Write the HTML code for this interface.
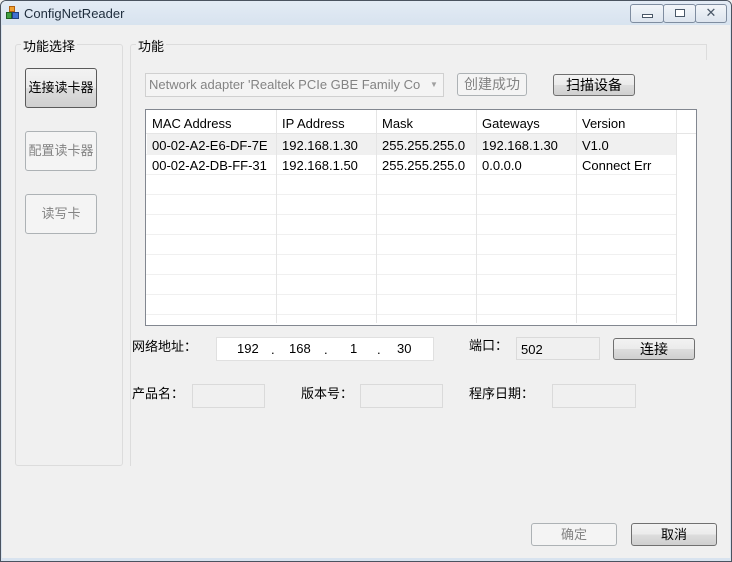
<!DOCTYPE html><html><head><meta charset="utf-8"><style>
*{box-sizing:border-box;margin:0;padding:0}
body{width:732px;height:562px;overflow:hidden;background:#f0f0f0;font-family:"Liberation Sans","Noto Sans CJK SC",sans-serif;font-size:13px;color:#000;position:relative}
.a{position:absolute}
.win{left:0;top:0;width:732px;height:562px;border:1px solid #4a5360;border-radius:6px 6px 0 0;background:#f0f0f0}
.tb{left:1px;top:1px;width:730px;height:24px;background:linear-gradient(#e3ebf5,#d8e3ef);border-radius:5px 5px 0 0}
.frame{left:1px;top:25px;width:730px;height:536px;border:1px solid #d8e3ef;border-top:0;border-bottom:3px solid #d8e3ef}
.cb{height:18px;border:1px solid #7f8da0;border-radius:3px;background:linear-gradient(#f2f5f9,#dde5ee);top:5px}
.gb{border:1px solid #dcdcdc;border-radius:3px}
.btn{border:1px solid #707070;border-radius:3px;background:linear-gradient(#f2f2f2 0,#ebebeb 50%,#dddddd 51%,#cfcfcf 100%);text-align:center}
.dis{border:1px solid #adb2b5;border-radius:3px;background:#f4f4f4;color:#838383;text-align:center}
.tx{border:1px solid #dadada;background:#f0f0f0}
.lbl{font-size:13px}
.grid{left:145px;top:109px;width:552px;height:217px;border:1px solid #828790;background:#fff;overflow:hidden}
.hl{position:absolute;left:0;height:1px;width:530px;background:#f0f0f0}
.vl{position:absolute;top:0;width:1px;height:213px;background:#f0f0f0}
.c{position:absolute;font-size:13px;white-space:nowrap}
</style></head><body>
<div class="a win"></div>
<div class="a tb"></div>
<div class="a frame"></div>
<!-- icon -->
<div class="a" style="left:9px;top:6px;width:6px;height:6px;background:#f0a030;border:1px solid #b06010"></div>
<div class="a" style="left:6px;top:12px;width:6px;height:7px;background:#40a040;border:1px solid #206020"></div>
<div class="a" style="left:12px;top:12px;width:7px;height:7px;background:#4070d0;border:1px solid #204080"></div>
<div class="a" style="left:24px;top:6px;font-size:13px;color:#1e2d3c">ConfigNetReader</div>
<div class="a cb" style="left:630px;top:4px;width:34px;height:19px"><div class="a" style="left:11px;top:9px;width:11px;height:4px;border:1px solid #4a5868;background:#fff"></div></div>
<div class="a cb" style="left:663px;top:4px;width:33px;height:19px"><div class="a" style="left:11px;top:4px;width:10px;height:8px;border:1px solid #4a5868;background:#fff"></div></div>
<div class="a cb" style="left:695px;top:4px;width:32px;height:19px;text-align:center;font-size:13px;line-height:16px;color:#4a5868">✕</div>

<!-- left group -->
<div class="a gb" style="left:15px;top:44px;width:108px;height:422px"></div>
<div class="a lbl" style="left:21px;top:36px;background:#f0f0f0;padding:0 2px">功能选择</div>
<div class="a btn" style="left:25px;top:68px;width:72px;height:40px;line-height:38px;border-color:#5a5a5a">连接读卡器</div>
<div class="a dis" style="left:25px;top:131px;width:72px;height:40px;line-height:38px">配置读卡器</div>
<div class="a dis" style="left:25px;top:194px;width:72px;height:40px;line-height:38px">读写卡</div>

<!-- right group -->
<div class="a" style="left:130px;top:44px;width:577px;height:422px;border-left:1px solid #dcdcdc;border-top:1px solid #dcdcdc;border-radius:3px 0 0 0"></div>
<div class="a" style="left:706px;top:44px;width:1px;height:16px;background:#dcdcdc"></div>
<div class="a lbl" style="left:136px;top:36px;background:#f0f0f0;padding:0 2px">功能</div>

<div class="a" style="left:145px;top:73px;width:299px;height:24px;border:1px solid #d0d0d0;background:#f4f4f4;color:#838383;line-height:22px;padding-left:3px;overflow:hidden;white-space:nowrap">Network adapter 'Realtek PCIe GBE Family Co</div>
<div class="a" style="left:425px;top:74px;width:18px;height:22px;background:#f4f4f4;color:#a0a0a0;font-size:8px;line-height:22px;text-align:center">▼</div>
<div class="a dis" style="left:457px;top:73px;width:70px;height:23px;line-height:21px;font-size:14px">创建成功</div>
<div class="a btn" style="left:553px;top:74px;width:82px;height:22px;line-height:20px;font-size:14px">扫描设备</div>

<div class="a grid">
 <div class="a" style="left:0;top:0;width:550px;height:24px;background:#fff;border-bottom:1px solid #e5e5e5"></div>
 <div class="a" style="left:1px;top:24px;width:529px;height:20px;background:#f0f0f0"></div>
 <div class="hl" style="top:44px"></div><div class="hl" style="top:64px"></div><div class="hl" style="top:84px"></div><div class="hl" style="top:104px"></div><div class="hl" style="top:124px"></div><div class="hl" style="top:144px"></div><div class="hl" style="top:164px"></div><div class="hl" style="top:184px"></div><div class="hl" style="top:204px"></div>
 <div class="vl" style="left:130px;background:#e5e5e5"></div><div class="vl" style="left:230px;background:#e5e5e5"></div><div class="vl" style="left:330px;background:#e5e5e5"></div><div class="vl" style="left:430px;background:#e5e5e5"></div><div class="vl" style="left:530px;background:#e5e5e5"></div>
 <div class="c" style="left:6px;top:6px">MAC Address</div><div class="c" style="left:136px;top:6px">IP Address</div><div class="c" style="left:236px;top:6px">Mask</div><div class="c" style="left:336px;top:6px">Gateways</div><div class="c" style="left:436px;top:6px">Version</div>
 <div class="c" style="left:6px;top:28px">00-02-A2-E6-DF-7E</div><div class="c" style="left:136px;top:28px">192.168.1.30</div><div class="c" style="left:236px;top:28px">255.255.255.0</div><div class="c" style="left:336px;top:28px">192.168.1.30</div><div class="c" style="left:436px;top:28px">V1.0</div>
 <div class="c" style="left:6px;top:48px">00-02-A2-DB-FF-31</div><div class="c" style="left:136px;top:48px">192.168.1.50</div><div class="c" style="left:236px;top:48px">255.255.255.0</div><div class="c" style="left:336px;top:48px">0.0.0.0</div><div class="c" style="left:436px;top:48px">Connect Err</div>
</div>

<div class="a lbl" style="left:132px;top:336px">网络地址：</div>
<div class="a" style="left:216px;top:337px;width:218px;height:24px;border:1px solid #e0e0e0;background:#fff"></div>
<div class="a" style="left:237px;top:341px">192</div><div class="a" style="left:271px;top:342px">.</div>
<div class="a" style="left:289px;top:341px">168</div><div class="a" style="left:324px;top:342px">.</div>
<div class="a" style="left:350px;top:341px">1</div><div class="a" style="left:377px;top:342px">.</div>
<div class="a" style="left:397px;top:341px">30</div>
<div class="a lbl" style="left:469px;top:335px">端口：</div>
<div class="a tx" style="left:516px;top:337px;width:84px;height:23px;padding:4px 0 0 4px">502</div>
<div class="a btn" style="left:613px;top:338px;width:82px;height:22px;line-height:20px;font-size:14px">连接</div>

<div class="a lbl" style="left:132px;top:383px">产品名：</div>
<div class="a tx" style="left:192px;top:384px;width:73px;height:24px"></div>
<div class="a lbl" style="left:301px;top:383px">版本号：</div>
<div class="a tx" style="left:360px;top:384px;width:83px;height:24px"></div>
<div class="a lbl" style="left:469px;top:383px">程序日期：</div>
<div class="a tx" style="left:552px;top:384px;width:84px;height:24px"></div>

<div class="a dis" style="left:531px;top:523px;width:86px;height:23px;line-height:21px">确定</div>
<div class="a btn" style="left:631px;top:523px;width:86px;height:23px;line-height:21px">取消</div>
</body></html>
